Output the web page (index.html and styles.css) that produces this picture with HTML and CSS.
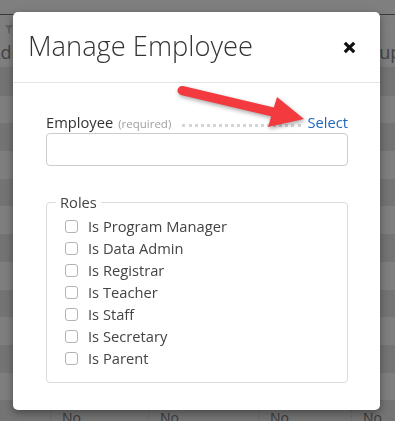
FILE: index.html
```html
<!DOCTYPE html>
<html lang="en">
<head>
    <meta charset="UTF-8">
    <meta name="viewport" content="width=device-width, initial-scale=1.0">
    <title>Manage Employee</title>
    <link rel="stylesheet" href="styles.css">
</head>
<body>
    <div class="table">
        <div class="toolbar"></div>
        <div class="thead">
            <div class="th th-first">
                <svg class="filter" width="8" height="9" viewBox="0 0 8 9"><path d="M0 0H8L5 4V9L3 7.5V4Z" fill="#c8c8c8"/></svg>
                <span class="th-text">Adr</span>
            </div>
            <div class="th"></div>
            <div class="th"></div>
            <div class="th"></div>
            <div class="th th-last"><span class="th-text">Group</span></div>
        </div>
        <div class="row"></div>
        <div class="row"></div>
        <div class="row"></div>
        <div class="row"></div>
        <div class="row"></div>
        <div class="row"></div>
        <div class="row"></div>
        <div class="row"></div>
        <div class="row"></div>
        <div class="row"></div>
        <div class="row"></div>
        <div class="row"></div>
        <div class="row row-last">
            <div class="td"></div>
            <div class="td">No</div>
            <div class="td">No</div>
            <div class="td">No</div>
            <div class="td">No</div>
        </div>
    </div>

    <div class="backdrop"></div>

    <div class="modal">
        <div class="modal-header">
            <h1>Manage Employee</h1>
            <svg class="close" width="13" height="13" viewBox="0 0 13 13">
                <path d="M1.8 1.8L11.2 11.2M11.2 1.8L1.8 11.2" stroke="#111" stroke-width="3.2"/>
            </svg>
        </div>
        <div class="modal-body">
            <div class="field-head">
                <span class="label">Employee</span>
                <span class="hint">(required)</span>
                <span class="dots"></span>
                <a class="select" href="#">Select</a>
            </div>
            <input class="text-input" type="text">

            <fieldset class="roles">
                <legend>Roles</legend>
                <label class="check"><input type="checkbox"> Is Program Manager</label>
                <label class="check"><input type="checkbox"> Is Data Admin</label>
                <label class="check"><input type="checkbox"> Is Registrar</label>
                <label class="check"><input type="checkbox"> Is Teacher</label>
                <label class="check"><input type="checkbox"> Is Staff</label>
                <label class="check"><input type="checkbox"> Is Secretary</label>
                <label class="check"><input type="checkbox"> Is Parent</label>
            </fieldset>
        </div>
    </div>

    <!-- annotation arrow pointing at "Select" -->
    <svg class="arrow" width="395" height="421" viewBox="0 0 395 421">
        <line x1="182" y1="90.5" x2="273" y2="112" stroke="#f23a3f" stroke-width="9" stroke-linecap="round"/>
        <polygon points="277,97 304,119 268,127" fill="#f23a3f"/>
    </svg>
</body>
</html>
```

FILE: styles.css
```css
body {
    margin: 0;
    height: 421px;
    overflow: hidden;
    font-family: "Open Sans", "Liberation Sans", sans-serif;
    background: #fff;
}

/* table behind the dialog */
.table {
    width: 395px;
    color: #888;
}
.toolbar {
    height: 14px;
    background: #fff;
    border-bottom: 1px solid #777;
}
.thead,
.row {
    display: grid;
    grid-template-columns: 50px 98px 110px 93px 1fr;
}
.thead {
    height: 52px;
    border-bottom: 1px solid #e4e4e4;
    font-size: 18px;
}
.th {
    position: relative;
}
.filter {
    position: absolute;
    left: 5px;
    top: 10px;
}
.th-text {
    display: block;
    margin-top: 27px;
    line-height: 20px;
}
.th-first .th-text {
    margin-left: -11px;
}
.th-last .th-text {
    margin-left: -3px;
}
.row {
    height: 27.7px;
    background: #fff;
}
.row:nth-child(odd) {
    background: #e8e8e8;
}
.row-last .td {
    padding: 8px 0 0 11px;
    font-size: 14px;
    border-left: 1px dashed #ccc;
    color: #777;
}
.row-last .td:first-child {
    border-left: none;
}

.backdrop {
    position: fixed;
    inset: 0;
    background: rgba(0, 0, 0, 0.5);
}

/* dialog */
.modal {
    position: absolute;
    left: 13px;
    top: 12px;
    width: 367px;
    background: #fff;
    border-radius: 5px;
    box-shadow: 0 3px 9px rgba(0, 0, 0, 0.4);
}
.modal-header {
    display: flex;
    justify-content: space-between;
    align-items: center;
    padding: 17px 24px 19px 15px;
    border-bottom: 1px solid #e3e3ea;
}
.modal-header h1 {
    margin: 0;
    font-size: 27.3px;
    font-weight: 300;
    line-height: 34px;
    color: #333;
}
.close {
    margin-top: 2px;
}
.modal-body {
    padding: 29px 32px 27px 33px;
    font-size: 14.7px;
    color: #444;
}
.field-head {
    display: flex;
    align-items: baseline;
    height: 20px;
    line-height: 20px;
    margin-bottom: 1px;
}
.label {
    color: #333;
}
.hint {
    margin-left: 5px;
    font-size: 11.5px;
    color: #a0a0a0;
}
.dots {
    flex: 1;
    align-self: flex-end;
    margin: 0 6px 5px 11px;
    border-bottom: 3px dotted #d6d6da;
}
.select {
    color: #1f66c1;
    text-decoration: none;
}
.text-input {
    display: block;
    width: 100%;
    height: 33px;
    box-sizing: border-box;
    border: 1px solid #ccc;
    border-radius: 4px;
    margin: 0;
}
.roles {
    margin: 26px 0 0;
    padding: 3px 18px 13px;
    border: 1px solid #dcdcdc;
    border-radius: 4px;
}
.roles legend {
    margin-left: -9px;
    padding: 0 4px;
    line-height: 20px;
    color: #444;
}
.check {
    display: flex;
    align-items: center;
    height: 22px;
    color: #444;
}
.check input {
    appearance: none;
    width: 13px;
    height: 13px;
    margin: 0 10px 0 0;
    border: 1px solid #b4b4b4;
    border-radius: 3px;
    background: #fff;
}

.arrow {
    position: absolute;
    left: 0;
    top: 0;
    pointer-events: none;
    filter: drop-shadow(1px 2px 2px rgba(0, 0, 0, 0.35));
}
```
